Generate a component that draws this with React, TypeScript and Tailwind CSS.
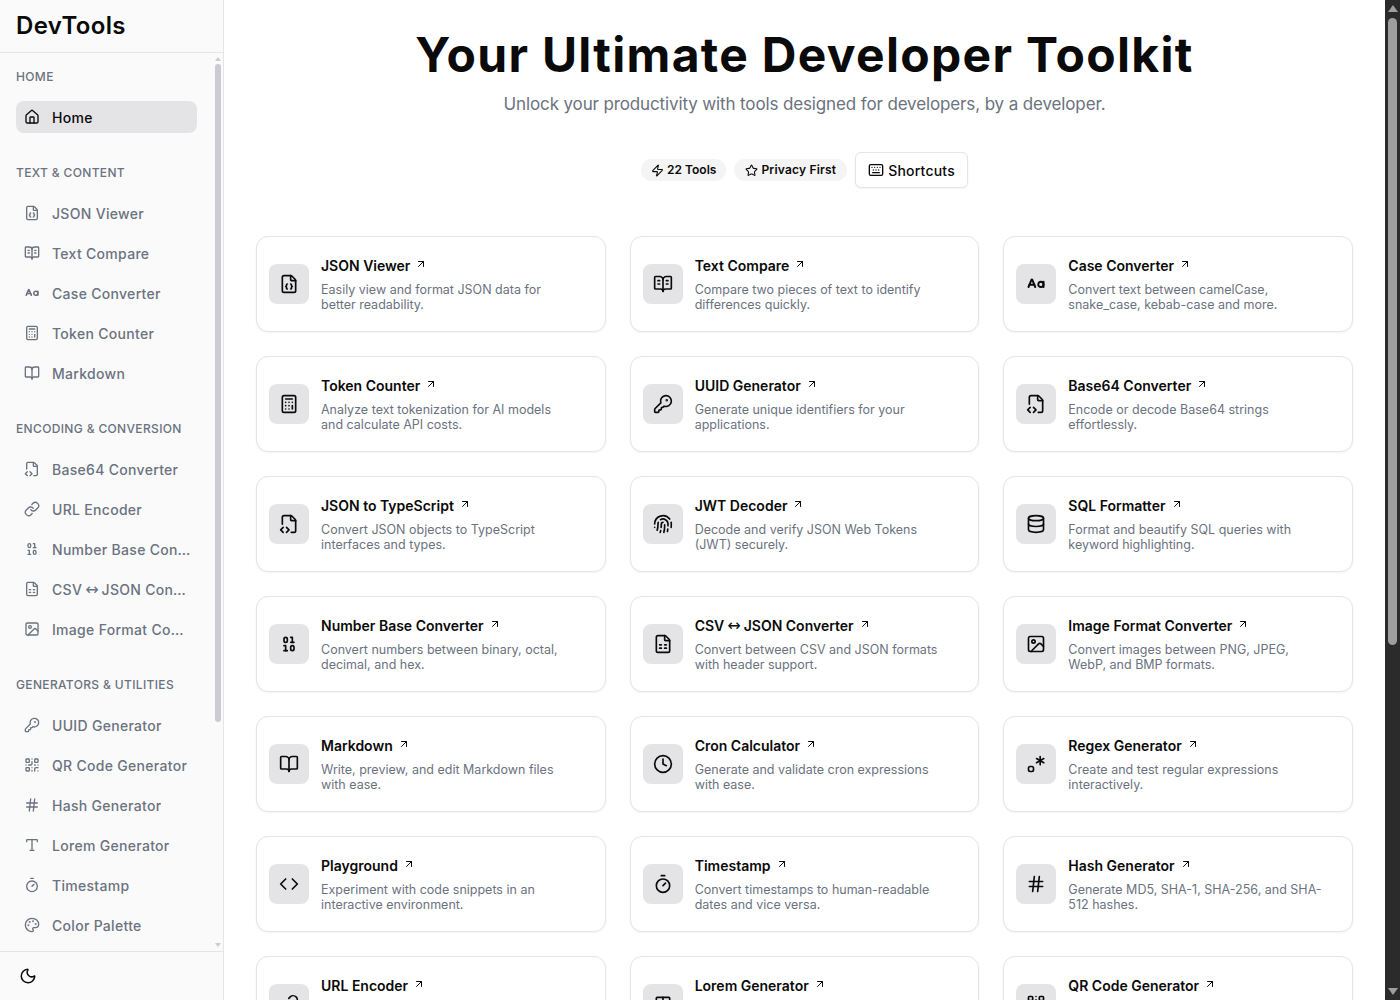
import {
  ArrowUpRight, Binary, BookOpen, BookOpenText, Calculator, CaseSensitive, Clock, Code, Database,
  FileCode2, FileJson, FileSpreadsheet, Fingerprint, Hash, House, Image, KeyRound, Keyboard, Link,
  Moon, Palette, QrCode, Regex, Star, Timer, Type, Zap,
} from 'lucide-react'

// the Aa glyph sits smaller and heavier than the stock icon
function CaseIcon({ size = 16 }: { size?: number; strokeWidth?: number; className?: string }) {
  return <CaseSensitive size={size - 2} strokeWidth={2.6} className="shrink-0" />
}

const sections = [
  { title: 'Home', items: [{ name: 'Home', icon: House, active: true }] },
  {
    title: 'Text & Content',
    items: [
      { name: 'JSON Viewer', icon: FileJson },
      { name: 'Text Compare', icon: BookOpenText },
      { name: 'Case Converter', icon: CaseIcon },
      { name: 'Token Counter', icon: Calculator },
      { name: 'Markdown', icon: BookOpen },
    ],
  },
  {
    title: 'Encoding & Conversion',
    items: [
      { name: 'Base64 Converter', icon: FileCode2 },
      { name: 'URL Encoder', icon: Link },
      { name: 'Number Base Converter', icon: Binary },
      { name: 'CSV ↔ JSON Converter', icon: FileSpreadsheet },
      { name: 'Image Format Converter', icon: Image },
    ],
  },
  {
    title: 'Generators & Utilities',
    items: [
      { name: 'UUID Generator', icon: KeyRound },
      { name: 'QR Code Generator', icon: QrCode },
      { name: 'Hash Generator', icon: Hash },
      { name: 'Lorem Generator', icon: Type },
      { name: 'Timestamp', icon: Timer },
      { name: 'Color Palette', icon: Palette },
    ],
  },
]

const tools = [
  { name: 'JSON Viewer', icon: FileJson, desc: 'Easily view and format JSON data for\nbetter readability.' },
  { name: 'Text Compare', icon: BookOpenText, desc: 'Compare two pieces of text to identify\ndifferences quickly.' },
  { name: 'Case Converter', icon: CaseIcon, desc: 'Convert text between camelCase,\nsnake_case, kebab-case and more.' },
  { name: 'Token Counter', icon: Calculator, desc: 'Analyze text tokenization for AI models\nand calculate API costs.' },
  { name: 'UUID Generator', icon: KeyRound, desc: 'Generate unique identifiers for your\napplications.' },
  { name: 'Base64 Converter', icon: FileCode2, desc: 'Encode or decode Base64 strings\neffortlessly.' },
  { name: 'JSON to TypeScript', icon: FileCode2, desc: 'Convert JSON objects to TypeScript\ninterfaces and types.' },
  { name: 'JWT Decoder', icon: Fingerprint, desc: 'Decode and verify JSON Web Tokens\n(JWT) securely.' },
  { name: 'SQL Formatter', icon: Database, desc: 'Format and beautify SQL queries with\nkeyword highlighting.' },
  { name: 'Number Base Converter', icon: Binary, desc: 'Convert numbers between binary, octal,\ndecimal, and hex.' },
  { name: 'CSV ↔ JSON Converter', icon: FileSpreadsheet, desc: 'Convert between CSV and JSON formats\nwith header support.' },
  { name: 'Image Format Converter', icon: Image, desc: 'Convert images between PNG, JPEG,\nWebP, and BMP formats.' },
  { name: 'Markdown', icon: BookOpen, desc: 'Write, preview, and edit Markdown files\nwith ease.' },
  { name: 'Cron Calculator', icon: Clock, desc: 'Generate and validate cron expressions\nwith ease.' },
  { name: 'Regex Generator', icon: Regex, desc: 'Create and test regular expressions\ninteractively.' },
  { name: 'Playground', icon: Code, desc: 'Experiment with code snippets in an\ninteractive environment.' },
  { name: 'Timestamp', icon: Timer, desc: 'Convert timestamps to human-readable\ndates and vice versa.' },
  { name: 'Hash Generator', icon: Hash, desc: 'Generate MD5, SHA-1, SHA-256, and SHA-\n512 hashes.' },
  { name: 'URL Encoder', icon: Link, desc: 'Encode and decode URLs and\nquery parameters.' },
  { name: 'Lorem Generator', icon: Type, desc: 'Generate placeholder text for\nyour designs.' },
  { name: 'QR Code Generator', icon: QrCode, desc: 'Create QR codes from text\nand links.' },
]

// the arrow is thin and tight in the original, Inter's is too heavy
function ToolName({ name }: { name: string }) {
  const parts = name.split(' ↔ ')
  if (parts.length === 1) return <>{name}</>
  return (
    <>
      {parts[0]}
      <span className="mx-[3px] font-['DejaVu_Sans'] text-[16px] font-normal leading-none tracking-normal">↔</span>
      {parts[1]}
    </>
  )
}

function Sidebar() {
  return (
    <aside className="flex h-full w-[224px] shrink-0 flex-col border-r border-[#e5e5e5] bg-[#fafafa]">
      <div className="flex h-[53px] shrink-0 items-center border-b border-[#e5e5e5] px-4">
        <span className="text-[24px] font-semibold tracking-[0.35px] text-[#0a0a0a]">DevTools</span>
      </div>
      <div className="flex min-h-0 flex-1">
        <nav className="min-w-0 flex-1 overflow-hidden pt-4 pl-4 pr-[17px]">
          {sections.map(section => (
            <div key={section.title} className="mb-[32px]">
              <div className="mb-[16px] flex h-4 items-center text-[12px] font-medium uppercase tracking-[0.35px] text-[#6b7280]">
                {section.title}
              </div>
              <div className="flex flex-col gap-2">
                {section.items.map(item => (
                  <div
                    key={item.name}
                    className={`flex h-8 items-center gap-3 rounded-lg pl-2 pr-[6px] text-[14px] font-medium tracking-[0.3px] ${item.active ? 'bg-[#e4e4e7] text-[#0a0a0a]' : 'text-[#6b7280]'}`}
                  >
                    <span className="flex w-4 shrink-0 justify-center">
                      <item.icon size={16} strokeWidth={2} />
                    </span>
                    <span className="truncate">
                      <ToolName name={item.name} />
                    </span>
                  </div>
                ))}
              </div>
            </div>
          ))}
        </nav>
        <div className="mr-[1px] flex w-[8px] shrink-0 flex-col items-center pt-1 pr-[1px] pb-1">
          <div className="h-0 w-0 border-x-[3px] border-b-[4px] border-x-transparent border-b-[#c9ccd2]" />
          <div className="mt-[3px] h-[658px] w-[6px] rounded-full bg-[#c9ccd2]" />
          <div className="flex-1" />
          <div className="h-0 w-0 border-x-[3px] border-t-[4px] border-x-transparent border-t-[#c9ccd2]" />
        </div>
      </div>
      <div className="flex h-[49px] shrink-0 items-center border-t border-[#e5e5e5] px-[19px]">
        <Moon size={18} strokeWidth={2} className="text-[#0a0a0a]" />
      </div>
    </aside>
  )
}

function ToolCard({ tool }: { tool: (typeof tools)[number] }) {
  return (
    <div className="flex h-[96px] items-center gap-3 rounded-xl border border-[#e5e5e5] bg-white px-3 shadow-xs">
      <div className="flex h-10 w-10 shrink-0 items-center justify-center rounded-lg bg-[#e4e4e7] text-[#0a0a0a]">
        <tool.icon size={20} strokeWidth={2} />
      </div>
      <div className="min-w-0">
        <div className="flex items-center gap-[5px]">
          <span className="text-[14px] font-semibold leading-5 text-[#0a0a0a]">
            <ToolName name={tool.name} />
          </span>
          <ArrowUpRight size={12} strokeWidth={2} className="mb-1 text-[#0a0a0a]" />
        </div>
        <p className="mt-[6px] whitespace-pre-line text-[12.5px] leading-[15px] text-[#6b7280]">{tool.desc}</p>
      </div>
    </div>
  )
}

function PageScrollbar() {
  return (
    <div className="flex h-full w-[15px] shrink-0 flex-col items-center bg-[#2b2b2b] pt-[5px] pb-[5px]">
      <div className="h-0 w-0 border-x-[5px] border-b-[7px] border-x-transparent border-b-[#9e9e9e]" />
      <div className="mt-[6px] h-[627px] w-[9px] rounded-full bg-[#9e9e9e]" />
      <div className="flex-1" />
      <div className="h-0 w-0 border-x-[5px] border-t-[7px] border-x-transparent border-t-[#9e9e9e]" />
    </div>
  )
}

export default function App() {
  return (
    <div className="flex h-screen overflow-hidden bg-white font-['Inter','Liberation_Sans',sans-serif]">
      <Sidebar />
      <main className="min-w-0 flex-1 overflow-hidden px-8 pt-[25px]">
        <h1 className="text-center text-[48px] font-bold leading-[60px] tracking-[1.3px] text-[#0a0a0a]">Your Ultimate Developer Toolkit</h1>
        <p className="mt-[5px] text-center text-[17px] leading-7 tracking-[-0.13px] text-[#6b7280]">
          Unlock your productivity with tools designed for developers, by a developer.
        </p>
        <div className="mt-[34px] flex items-center justify-center gap-2">
          <span className="flex h-[22px] items-center gap-[3px] rounded-full bg-[#f4f4f5] px-[10px] text-[12px] font-semibold text-[#0a0a0a]">
            <Zap size={13} strokeWidth={2} /> 22 Tools
          </span>
          <span className="flex h-[22px] items-center gap-[3px] rounded-full bg-[#f4f4f5] px-[11px] text-[12px] font-semibold tracking-[0.2px] text-[#0a0a0a]">
            <Star size={13} strokeWidth={2} /> Privacy First
          </span>
          <button className="flex h-9 items-center gap-[4px] rounded-md border border-[#e5e5e5] bg-white px-3 text-[14px] font-medium tracking-[0.2px] text-[#0a0a0a] shadow-xs">
            <Keyboard size={16} strokeWidth={2} /> Shortcuts
          </button>
        </div>
        <div className="mt-12 grid grid-cols-3 gap-6">
          {tools.map(t => (
            <ToolCard key={t.name} tool={t} />
          ))}
        </div>
      </main>
      <PageScrollbar />
    </div>
  )
}
